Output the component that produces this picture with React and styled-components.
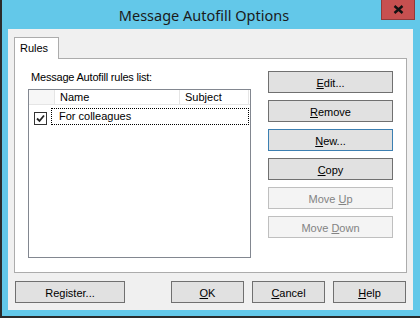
import React from 'react';
import styled, { createGlobalStyle } from 'styled-components';

const GlobalStyle = createGlobalStyle`
  html, body {
    margin: 0;
    padding: 0;
    background: #63c8e9;
  }
  body {
    font-family: 'Liberation Sans', Arial, sans-serif;
    font-size: 11px;
    color: #000;
  }
`;

const Frame = styled.div`
  width: 418px;
  height: 316px;
  background: #63c8e9;
  border-left: 2px solid #2b2b2b;
  border-bottom: 2px solid #2b2b2b;
  display: flex;
  flex-direction: column;
  overflow: hidden;
`;

const TitleBar = styled.div`
  height: 29px;
  position: relative;
  display: flex;
  justify-content: center;
  align-items: center;
`;

const Title = styled.span`
  font-family: 'Noto Sans', 'Open Sans', sans-serif;
  font-size: 14.5px;
  color: #1b1b1b;
  margin-top: 1px;
  margin-right: 14px;
`;

const CloseButton = styled.div`
  position: absolute;
  top: 0;
  left: 379px;
  width: 32px;
  height: 19px;
  background: #c75050;
  border: 1px solid #8f3b3b;
  border-top: none;
  display: flex;
  align-items: center;
  justify-content: center;
`;

const Client = styled.div`
  margin-left: 6px;
  width: 405px;
  height: 281px;
  background: #f0f0f0;
  box-sizing: border-box;
  padding: 8px 6px 0 6px;
  display: flex;
  flex-direction: column;
`;

const TabStrip = styled.div`
  display: flex;
  height: 21px;
  position: relative;
  z-index: 1;
`;

const Tab = styled.div`
  width: 45px;
  height: 22px;
  box-sizing: border-box;
  background: #fff;
  border: 1px solid #acacac;
  border-bottom: none;
  padding: 4px 0 0 5px;
  color: #000;
`;

const Panel = styled.div`
  width: 393px;
  height: 215px;
  box-sizing: border-box;
  background: #fff;
  border: 1px solid #acacac;
  display: flex;
  padding: 12px 14px 0 13px;
`;

const LeftCol = styled.div`
  display: flex;
  flex-direction: column;
  width: 223px;
`;

const Label = styled.div`
  height: 18px;
  padding-left: 3px;
  letter-spacing: -0.2px;
`;

const ListBox = styled.div`
  width: 223px;
  height: 169px;
  box-sizing: border-box;
  border: 1px solid #828790;
  background: #fff;
`;

const HeaderRow = styled.div`
  display: flex;
  height: 14px;
  border-bottom: 1px solid #e5e5e5;
`;

const HeaderCell = styled.div`
  width: ${p => p.$w}px;
  box-sizing: border-box;
  border-right: 1px solid #e5e5e5;
  padding-left: ${p => p.$pad || 0}px;
  line-height: 14px;
  background: ${p => p.$shade ? '#f7f7f7' : '#fff'};
`;

const Row = styled.div`
  display: flex;
  align-items: center;
  height: 17px;
  margin-top: 3px;
`;

const CheckCell = styled.div`
  width: 22px;
  display: flex;
  justify-content: center;
  padding-top: 4px;
`;

const CheckBox = styled.div`
  width: 13px;
  height: 13px;
  box-sizing: border-box;
  border: 1px solid #333;
  background: #fff;
  display: flex;
  align-items: center;
  justify-content: center;
`;

const FocusRow = styled.div`
  flex: 1;
  height: 17px;
  box-sizing: border-box;
  border: 1px dotted #000;
  margin-right: 1px;
  padding-left: 7px;
  line-height: 15px;
`;

const ButtonCol = styled.div`
  display: flex;
  flex-direction: column;
  gap: 7px;
  margin-left: 17px;
`;

const Button = styled.div`
  width: ${p => p.$w || 125}px;
  height: 22px;
  box-sizing: border-box;
  border: 1px solid ${p => p.$disabled ? '#bfbfbf' : p.$focus ? '#3c7fb1' : '#707070'};
  background: ${p => p.$disabled ? '#f4f4f4' : '#e1e1e1'};
  color: ${p => p.$disabled ? '#838383' : '#000'};
  display: flex;
  align-items: center;
  justify-content: center;
  padding-top: 1px;

  u {
    text-decoration: underline;
    text-underline-offset: 1px;
  }
`;

const Footer = styled.div`
  display: flex;
  margin-top: 8px;
  padding-left: 1px;
`;

const Spacer = styled.div`
  flex: 1;
`;

const FooterGroup = styled.div`
  display: flex;
  gap: 8px;
  margin-right: 1px;
`;

const CloseIcon = () => (
  <svg width="11" height="9" viewBox="0 0 11 9">
    <path d="M1.5 1 L9.5 8 M9.5 1 L1.5 8" stroke="#111" strokeWidth="2.4" />
  </svg>
);

const CheckMark = () => (
  <svg width="9" height="9" viewBox="0 0 9 9">
    <path d="M1 4.5 L3.5 7 L8 1.5" stroke="#222" strokeWidth="1.8" fill="none" />
  </svg>
);

export default function App() {
  return (
    <>
      <GlobalStyle />
      <Frame>
        <TitleBar>
          <Title>Message Autofill Options</Title>
          <CloseButton>
            <CloseIcon />
          </CloseButton>
        </TitleBar>
        <Client>
          <TabStrip>
            <Tab>Rules</Tab>
          </TabStrip>
          <Panel>
            <LeftCol>
              <Label>Message Autofill rules list:</Label>
              <ListBox>
                <HeaderRow>
                  <HeaderCell $w={26} $shade />
                  <HeaderCell $w={125} $pad={5}>Name</HeaderCell>
                  <HeaderCell $w={69} $pad={5}>Subject</HeaderCell>
                </HeaderRow>
                <Row>
                  <CheckCell>
                    <CheckBox>
                      <CheckMark />
                    </CheckBox>
                  </CheckCell>
                  <FocusRow>For colleagues</FocusRow>
                </Row>
              </ListBox>
            </LeftCol>
            <ButtonCol>
              <Button><span><u>E</u>dit...</span></Button>
              <Button><span><u>R</u>emove</span></Button>
              <Button $focus><span><u>N</u>ew...</span></Button>
              <Button><span><u>C</u>opy</span></Button>
              <Button $disabled><span>Move <u>U</u>p</span></Button>
              <Button $disabled><span>Move <u>D</u>own</span></Button>
            </ButtonCol>
          </Panel>
          <Footer>
            <Button $w={110}>Register...</Button>
            <Spacer />
            <FooterGroup>
              <Button $w={73}><span><u>O</u>K</span></Button>
              <Button $w={73}><span><u>C</u>ancel</span></Button>
              <Button $w={73}><span><u>H</u>elp</span></Button>
            </FooterGroup>
          </Footer>
        </Client>
      </Frame>
    </>
  );
}
